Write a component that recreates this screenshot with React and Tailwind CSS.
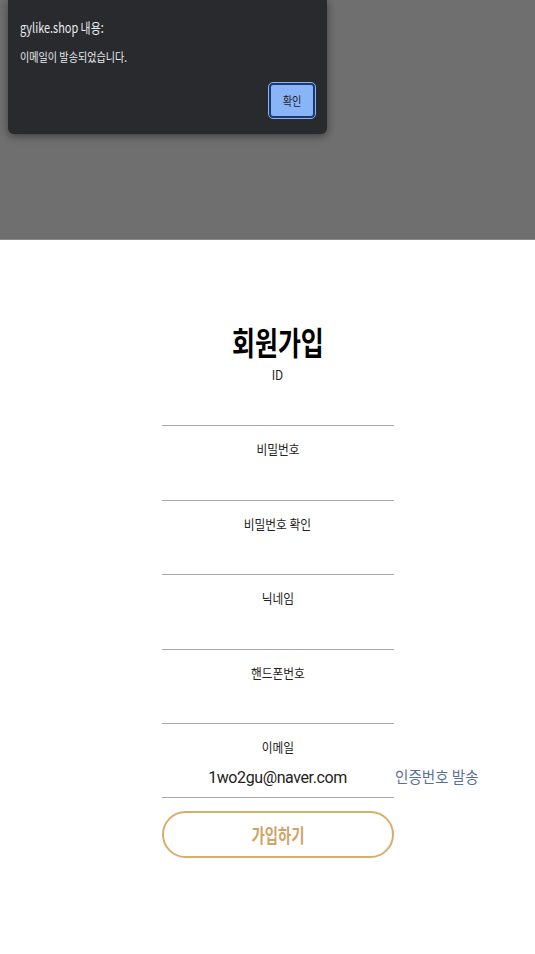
import React, { useState } from 'react';

const Field = ({ label, value = '', type = 'text', first = false, children }) => (
    <div className={`w-full flex flex-col items-center ${first ? 'mt-[5px]' : 'mt-[14px]'}`}>
        <label className="inline-block scale-x-[0.9] text-[13px] leading-[18px] text-[#222]">{label}</label>
        <div className="relative w-full">
            <input
                type={type}
                defaultValue={value}
                className="w-full h-[42.4px] pt-[1px] border-b border-[#a9a9a9] text-center text-[16px] tracking-[-0.4px] text-[#222] outline-none bg-transparent font-['Roboto',sans-serif]"
            />
            {children}
        </div>
    </div>
);

const App = () => {
    const [open, setOpen] = useState(true);

    return (
        <div className="min-h-[954px] bg-white font-['Noto_Sans_CJK_KR','Noto_Sans',sans-serif]">
            {/* dimmed top band with the browser alert */}
            <div className="h-[240px] bg-[#6f6f6f] border-b border-[#8a8a8a]">
                {open && (
                    <div className="ml-2 w-[319px] h-[134px] bg-[#292a2d] rounded-b-[6px] shadow-[0_2px_8px_rgba(0,0,0,0.45)] px-3 pt-[17px] flex flex-col">
                        <p className="origin-left scale-x-[0.78] text-[14px] leading-[20px] text-[#e8eaed] whitespace-nowrap">gylike.shop 내용:</p>
                        <p className="mt-[11px] origin-left scale-x-[0.84] text-[12px] leading-[18px] text-[#e8eaed] whitespace-nowrap">이메일이 발송되었습니다.</p>
                        <div className="flex justify-end mt-[17px]">
                            <button
                                onClick={() => setOpen(false)}
                                className="w-[46px] h-[35px] rounded-[4px] bg-[#8ab4f8] border-2 border-[#1a3a6e] outline outline-1 outline-[#8ab4f8] text-[12px] text-[#202124]"
                            >
                                <span className="inline-block scale-x-[0.85]">확인</span>
                            </button>
                        </div>
                    </div>
                )}
            </div>

            {/* sign up form */}
            <div className="flex justify-center pl-5 pt-[81px]">
                <div className="w-[232px] flex flex-col items-center">
                    <h1 className="inline-block scale-x-[0.78] text-[32px] leading-[40px] font-bold text-black">회원가입</h1>
                    <Field label="ID" first />
                    <Field label="비밀번호" type="password" />
                    <Field label="비밀번호 확인" type="password" />
                    <Field label="닉네임" />
                    <Field label="핸드폰번호" />
                    <Field label="이메일" value="1wo2gu@naver.com">
                        <button className="absolute left-full top-[8px] ml-[1px] origin-left scale-x-[0.91] whitespace-nowrap text-[16px] leading-[24px] text-[#5b6f9f]">
                            인증번호 발송
                        </button>
                    </Field>
                    <button className="mt-[13px] w-full h-[47px] rounded-full border-2 border-[#d9ad6c] bg-white text-[#cfa468]">
                        <span className="inline-block scale-x-[0.76] text-[19px] font-bold">가입하기</span>
                    </button>
                </div>
            </div>
        </div>
    );
};

export default App;
